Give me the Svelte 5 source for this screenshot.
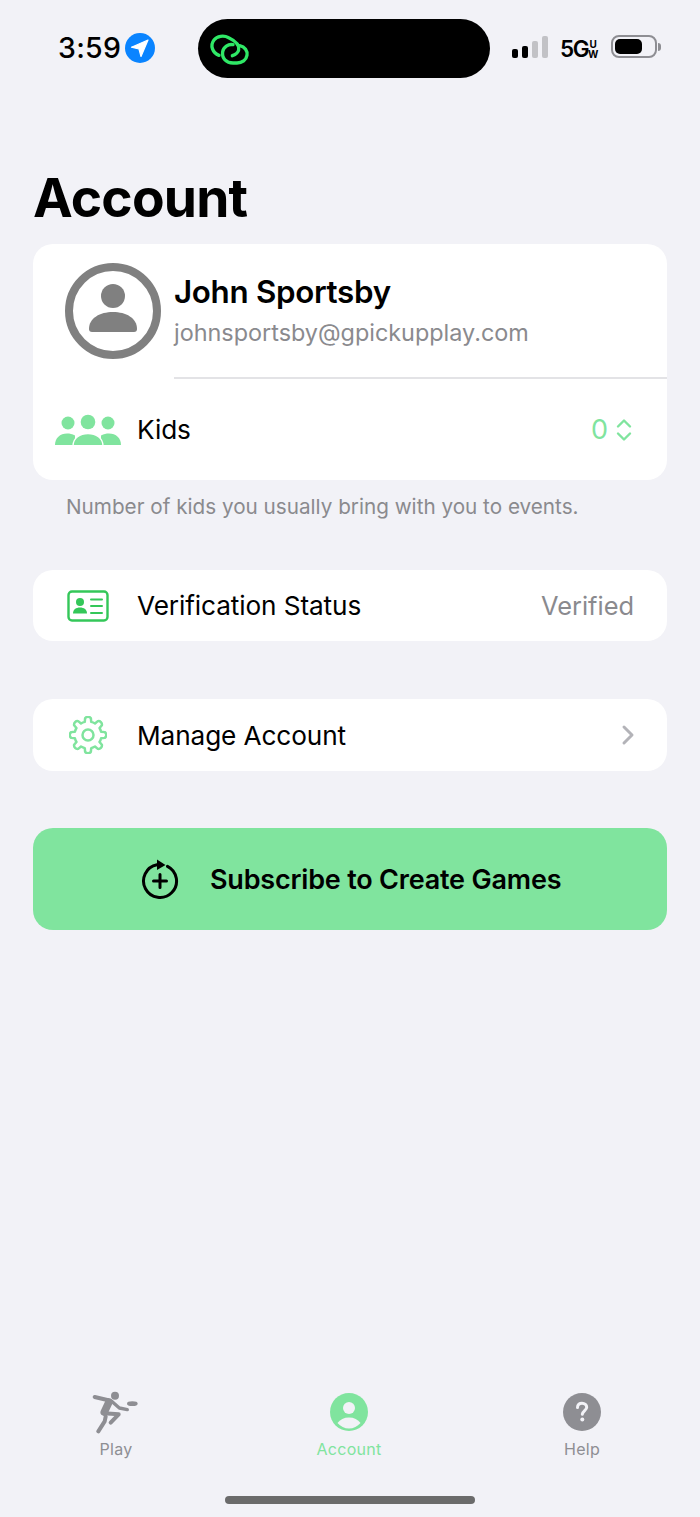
<script>
  const tabs = [
    { id: "play", label: "Play" },
    { id: "account", label: "Account", active: true },
    { id: "help", label: "Help" },
  ];

  // eight rounded cog teeth around (19,19)
  function gearPath(outer, root, teeth) {
    const pt = (r, a) => `${(19 + r * Math.sin(a)).toFixed(2)} ${(19 - r * Math.cos(a)).toFixed(2)}`;
    let d = "";
    for (let i = 0; i < teeth; i++) {
      const a = (i * 2 * Math.PI) / teeth;
      d += `${i === 0 ? "M" : `A${root} ${root} 0 0 1 `}${pt(root, a - 0.24)} `;
      d += `L${pt(outer, a - 0.17)} A3.500 3.500 0 0 1 ${pt(outer, a + 0.17)} L${pt(root, a + 0.24)} `;
    }
    return d + `A${root} ${root} 0 0 1 ${pt(root, -0.24)} Z`;
  }
  const gear = gearPath(17, 13.5, 8);
</script>

<div class="screen">
  <header class="status">
    <div class="status-left">
      <span class="time">3:59</span>
      <svg class="loc" viewBox="0 0 30 30" width="30" height="30">
        <circle cx="15" cy="15" r="15" fill="#0a84ff" />
        <path d="M23 7 L6.500 14.200 L14 16 L16 23.500 Z" fill="#fff" stroke="#fff" stroke-width="1.200" stroke-linejoin="round" />
      </svg>
    </div>
    <div class="island">
      <svg viewBox="0 0 150 120" width="50" height="40" fill="none" stroke="#2fe866" stroke-width="10" stroke-linecap="round">
        <path d="M42 79 C23 72 14 50 27 33 C36 21 56 18 71 26 C90 35 104 49 101 63 C99 73 91 77 82 80" />
        <path d="M104 50 C120 53 128 66 126 79 C124 93 111 102 96 102 L84 102 C64 102 50 88 53 68 C55 54 70 44 84 47" />
      </svg>
    </div>
    <div class="status-right">
      <div class="signal">
        <i class="on h1"></i><i class="on h2"></i><i class="h3"></i><i class="h4"></i>
      </div>
      <div class="net">
        <span class="fiveg">5G</span>
        <span class="uw"><b>U</b><b>W</b></span>
      </div>
      <div class="battery">
        <div class="shell"><div class="level"></div></div>
        <div class="nub"></div>
      </div>
    </div>
  </header>

  <main class="content">
    <h1>Account</h1>

    <section class="card">
      <div class="profile">
        <svg class="avatar" viewBox="0 0 96 96" width="96" height="96">
          <circle cx="48" cy="48" r="44" fill="none" stroke="#808080" stroke-width="8" />
          <circle cx="48" cy="33" r="12" fill="#808080" />
          <path d="M24 66 C24 55 35 49 48 49 C61 49 72 55 72 66 C72 68 71 69 69 69 L27 69 C25 69 24 68 24 66 Z" fill="#808080" />
        </svg>
        <div class="who">
          <div class="name">John Sportsby</div>
          <div class="email">johnsportsby@gpickupplay.com</div>
        </div>
      </div>
      <div class="divider"></div>
      <div class="row kids">
        <svg class="icon" viewBox="0 0 66 32" width="66" height="32" fill="#80e49e">
          <circle cx="13" cy="9" r="6.500" />
          <circle cx="33" cy="8" r="7.300" />
          <circle cx="53" cy="9" r="6.500" />
          <path d="M0 31 C0 24 5 19.500 12 19.500 C15 19.500 17 20 20 21.500 L20 31 Z" />
          <path d="M66 31 C66 24 61 19.500 54 19.500 C51 19.500 49 20 46 21.500 L46 31 Z" />
          <path d="M18 31.800 C18 24 25 19.500 33 19.500 C41 19.500 48 24 48 31.800 Z" stroke="#fff" stroke-width="1.400" />
        </svg>
        <span class="label">Kids</span>
        <span class="value green">0</span>
        <svg class="updown" viewBox="0 0 16 24" width="16" height="24" fill="none" stroke="#80e49e" stroke-width="2.400" stroke-linecap="round" stroke-linejoin="round">
          <path d="M2 8.500 L8 2.500 L14 8.500" />
          <path d="M2 15.500 L8 21.500 L14 15.500" />
        </svg>
      </div>
    </section>
    <p class="hint">Number of kids you usually bring with you to events.</p>

    <section class="card single verification">
      <svg class="icon" viewBox="0 0 42 32" width="42" height="32">
        <rect x="1.500" y="1.500" width="39" height="29" rx="3.500" fill="none" stroke="#34c759" stroke-width="2.400" />
        <circle cx="13" cy="12" r="4" fill="#34c759" />
        <path d="M6 23.500 C6 19.500 9 17.500 13 17.500 C17 17.500 20 19.500 20 23.500 Z" fill="#34c759" />
        <path d="M24 9.500 H35 M24 16 H35 M24 23 H35" stroke="#34c759" stroke-width="2" stroke-linecap="round" />
      </svg>
      <span class="label">Verification Status</span>
      <span class="value">Verified</span>
    </section>

    <section class="card single manage">
      <svg class="icon" viewBox="0 0 38 38" width="38" height="38" fill="none" stroke="#80e49e" stroke-width="2.500" stroke-linejoin="round">
        <path d={gear} />
        <circle cx="19" cy="19" r="5.500" />
      </svg>
      <span class="label">Manage Account</span>
      <svg class="chevron" viewBox="0 0 14 22" width="14" height="22" fill="none" stroke="#b3b3b8" stroke-width="3" stroke-linecap="round" stroke-linejoin="round">
        <path d="M3 3 L11 11 L3 19" />
      </svg>
    </section>

    <button class="subscribe">
      <svg viewBox="0 0 38 42" width="38" height="42" fill="none" stroke="#000" stroke-width="3" stroke-linecap="round">
        <path d="M26.500 8.300 A16.500 16.500 0 1 1 16 6.800" />
        <path d="M16 1.500 L24.500 7 L16 12 Z" fill="#000" stroke="none" />
        <path d="M19 16.500 V29.500 M12.500 23 H25.500" />
      </svg>
      <span>Subscribe to Create Games</span>
    </button>
  </main>

  <nav class="tabs">
    {#each tabs as tab}
      <div class="tab" class:active={tab.active}>
        {#if tab.id === "play"}
          <svg viewBox="66 28 144 132" width="48" height="44" fill="none" stroke="#8e8e93" stroke-linecap="round" stroke-linejoin="round">
            <circle cx="135" cy="45" r="12" fill="#8e8e93" stroke="none" />
            <ellipse cx="187" cy="69" rx="16" ry="7" fill="#8e8e93" stroke="none" />
            <path d="M74 49 L112 58" stroke-width="12" />
            <path d="M117 64 L103 94" stroke-width="23" />
            <path d="M125 62 L148 82 L172 87" stroke-width="10" />
            <path d="M102 98 L146 101 L122 126" stroke-width="12" />
            <path d="M107 108 L104 122 L85 152" stroke-width="12" />
          </svg>
        {:else if tab.id === "account"}
          <svg viewBox="0 0 38 38" width="38" height="38">
            <circle cx="19" cy="19" r="19" fill="#80e49e" />
            <circle cx="19" cy="15" r="6" fill="#f2f2f7" />
            <path d="M7.500 30 C10 26.500 14 24.500 19 24.500 C24 24.500 28 26.500 30.500 30 C27.500 33.500 23.500 35.500 19 35.500 C14.500 35.500 10.500 33.500 7.500 30 Z" fill="#f2f2f7" />
          </svg>
        {:else}
          <svg viewBox="0 0 38 38" width="38" height="38">
            <circle cx="19" cy="19" r="19" fill="#8e8e93" />
            <path d="M14.500 14.500 C14.500 11.500 16.500 10.200 19 10.200 C21.800 10.200 23.700 12 23.700 14.200 C23.700 17.300 19.800 17.800 19.300 21.300" fill="none" stroke="#f2f2f7" stroke-width="3" stroke-linecap="round" />
            <circle cx="19.300" cy="26.500" r="2" fill="#f2f2f7" />
          </svg>
        {/if}
        <span>{tab.label}</span>
      </div>
    {/each}
  </nav>

  <div class="home"><div class="bar"></div></div>
</div>

<style>
  :global(body) {
    margin: 0;
    background: #f2f2f7;
  }

  .screen {
    height: 1517px;
    display: flex;
    flex-direction: column;
    background: #f2f2f7;
    color: #000;
    font-family: Inter, "Liberation Sans", sans-serif;
    overflow: hidden;
  }

  .status {
    height: 60px;
    padding: 19px 0 0 58px;
    display: flex;
    align-items: center;
  }

  .status-left {
    flex: none;
    width: 140px;
    margin-bottom: 2px;
    display: flex;
    align-items: center;
    gap: 4px;
  }

  .time {
    margin-bottom: 2px;
    font-size: 28.500px;
    font-weight: 500;
    letter-spacing: 0.3px;
  }

  .island {
    flex: none;
    width: 292px;
    height: 59px;
    margin-bottom: 1px;
    border-radius: 30px;
    background: #000;
    display: flex;
    align-items: center;
    padding-left: 7px;
    box-sizing: border-box;
  }

  .status-right {
    flex: none;
    margin-left: 22px;
    margin-bottom: 5px;
    display: flex;
    align-items: center;
  }

  .signal {
    display: flex;
    align-items: flex-end;
    gap: 4px;
    height: 23px;
  }

  .signal i {
    width: 6px;
    background: #c2c2c6;
    border-radius: 2px;
  }

  .signal .on {
    background: #000;
  }

  .h1 { height: 9px; }
  .h2 { height: 12px; }
  .h3 { height: 17px; }
  .h4 { height: 22px; }

  .net {
    flex: none;
    width: 38px;
    margin-left: 12px;
    margin-top: 4px;
    display: flex;
    align-items: center;
    justify-content: space-between;
  }

  .fiveg {
    font-size: 22.500px;
    font-weight: 600;
    letter-spacing: -1.500px;
  }

  .uw {
    display: flex;
    flex-direction: column;
    font-size: 10px;
    line-height: 10px;
    text-align: center;
  }

  .uw b {
    font-weight: 700;
  }

  .battery {
    margin-left: 13px;
    display: flex;
    align-items: center;
    gap: 1px;
  }

  .shell {
    width: 46px;
    height: 23px;
    padding: 2px;
    box-sizing: border-box;
    border: 2px solid #8e8e93;
    border-radius: 8px;
  }

  .level {
    width: 27px;
    height: 100%;
    background: #000;
    border-radius: 5px;
  }

  .nub {
    width: 3px;
    height: 8px;
    background: #8e8e93;
    border-radius: 0 3px 3px 0;
  }

  .content {
    flex: 1;
    padding: 0 33px;
  }

  h1 {
    margin: 0;
    padding-top: 88px;
    height: 77px;
    font-size: 53.300px;
    font-weight: 700;
    line-height: 62px;
    letter-spacing: -0.8px;
  }

  .card {
    background: #fff;
    border-radius: 20px;
  }

  .profile {
    height: 133px;
    padding-left: 32px;
    display: flex;
    align-items: center;
    box-sizing: border-box;
  }

  .avatar {
    flex: none;
  }

  .who {
    margin-left: 13px;
    padding-top: 3px;
  }

  .name {
    font-size: 31.300px;
    font-weight: 600;
    line-height: 42px;
    letter-spacing: -0.3px;
  }

  .email {
    font-size: 23.400px;
    line-height: 40px;
    color: #8a8a8e;
  }

  .divider {
    height: 2px;
    margin-left: 141px;
    background: #e3e3e6;
  }

  .row,
  .single {
    display: flex;
    align-items: center;
  }

  .kids {
    height: 101px;
    padding: 0 35px 0 22px;
  }

  .kids .label {
    margin-left: 16px;
  }

  .icon {
    flex: none;
  }

  .label {
    flex: 1;
    font-size: 26.200px;
    letter-spacing: -0.1px;
  }

  .value {
    font-size: 25.400px;
    color: #8a8a8e;
  }

  .green {
    font-size: 27px;
    color: #80e49e;
  }

  .updown {
    margin-left: 8px;
  }

  .hint {
    margin: 13px 0 0;
    padding-left: 33px;
    font-size: 20.700px;
    line-height: 28px;
    color: #8a8a8e;
  }

  .single {
    height: 72px;
    padding: 0 33px 0 34px;
  }

  .single .label {
    margin-left: 28px;
  }

  .verification {
    height: 71px;
    margin-top: 49px;
  }

  .manage {
    margin-top: 58px;
    padding-left: 36px;
  }

  .manage .label {
    margin-left: 30px;
  }

  .chevron {
    margin-right: -1px;
  }

  .subscribe {
    width: 100%;
    height: 102px;
    margin-top: 57px;
    padding: 0 0 0 108px;
    display: flex;
    align-items: center;
    gap: 31px;
    border: 0;
    border-radius: 20px;
    background: #80e49e;
    color: #000;
    font-family: inherit;
    font-size: 27px;
    font-weight: 600;
    letter-spacing: -0.2px;
  }

  .tabs {
    display: grid;
    grid-template-columns: 232px 234px 232px;
    height: 76px;
  }

  .tab {
    display: flex;
    flex-direction: column;
    align-items: center;
    color: #8e8e93;
    font-size: 16px;
    letter-spacing: 0.3px;
  }

  .tab svg {
    height: 44px;
    flex: none;
  }

  .tab span {
    margin-top: 5px;
    line-height: 20px;
  }

  .tab.active {
    color: #80e49e;
  }

  .home {
    height: 51px;
    padding-top: 30px;
    box-sizing: border-box;
    display: flex;
    justify-content: center;
  }

  .bar {
    width: 250px;
    height: 8px;
    border-radius: 4px;
    background: #6b6b6b;
  }
</style>
